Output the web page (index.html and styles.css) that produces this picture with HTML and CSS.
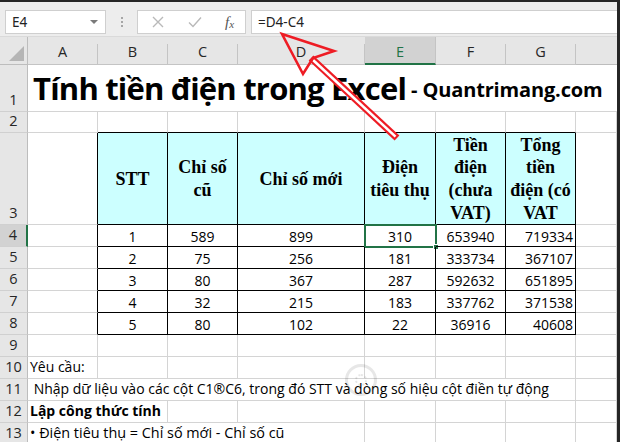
FILE: index.html
```html
<!DOCTYPE html>
<html lang="vi">
<head>
<meta charset="utf-8">
<link rel="stylesheet" href="styles.css">
</head>
<body>
<div class="app">
  <div class="toolbar">
    <div class="namebox"><span>E4</span><span class="dd"></span></div>
    <div class="dots"><i></i><i></i><i></i></div>
    <div class="fxgroup">
      <svg class="ic" width="12" height="12" viewBox="0 0 12 12"><path d="M1 1L11 11M11 1L1 11" stroke="#b9b9b9" stroke-width="1.4" fill="none"/></svg>
      <svg class="ic" width="14" height="12" viewBox="0 0 14 12"><path d="M1 6.5L5 10.5L13 1.5" stroke="#b9b9b9" stroke-width="1.4" fill="none"/></svg>
      <span class="fx">f<sub>x</sub></span>
    </div>
    <div class="formula">=D4-C4</div>
  </div>
  <div class="sheet">
    <!-- header row -->
    <div class="corner"><span class="tri"></span></div>
    <div class="h">A</div><div class="h">B</div><div class="h">C</div><div class="h">D</div><div class="h sel">E</div><div class="h">F</div><div class="h">G</div><div class="h last"></div>
    <!-- row 1 -->
    <div class="r">1</div>
    <div class="c title span8"><b class="big">Tính tiền điện trong Excel</b><b class="small"> - Quantrimang.com</b></div>
    <!-- row 2 -->
    <div class="r">2</div>
    <div class="c"></div><div class="c tt"></div><div class="c tt"></div><div class="c tt"></div><div class="c tt"></div><div class="c tt"></div><div class="c tt"></div><div class="c"></div>
    <!-- row 3 -->
    <div class="r">3</div>
    <div class="c tl"></div>
    <div class="th">STT</div>
    <div class="th">Chỉ số<br>cũ</div>
    <div class="th">Chỉ số mới</div>
    <div class="th">Điện<br>tiêu thụ</div>
    <div class="th">Tiền<br>điện<br>(chưa<br>VAT)</div>
    <div class="th">Tổng<br>tiền<br>điện (có<br>VAT</div>
    <div class="c"></div>
    <!-- row 4 -->
    <div class="r sel">4</div>
    <div class="c tl"></div><div class="td">1</div><div class="td">589</div><div class="td">899</div><div class="td active">310<span class="handle"></span></div><div class="td">653940</div><div class="td rt">719334</div><div class="c"></div>
    <!-- row 5 -->
    <div class="r">5</div>
    <div class="c tl"></div><div class="td">2</div><div class="td">75</div><div class="td">256</div><div class="td">181</div><div class="td">333734</div><div class="td rt">367107</div><div class="c"></div>
    <!-- row 6 -->
    <div class="r">6</div>
    <div class="c tl"></div><div class="td">3</div><div class="td">80</div><div class="td">367</div><div class="td">287</div><div class="td">592632</div><div class="td rt">651895</div><div class="c"></div>
    <!-- row 7 -->
    <div class="r">7</div>
    <div class="c tl"></div><div class="td">4</div><div class="td">32</div><div class="td">215</div><div class="td">183</div><div class="td">337762</div><div class="td rt">371538</div><div class="c"></div>
    <!-- row 8 -->
    <div class="r">8</div>
    <div class="c tl"></div><div class="td">5</div><div class="td">80</div><div class="td">102</div><div class="td">22</div><div class="td">36916</div><div class="td rt">40608</div><div class="c"></div>
    <!-- row 9 -->
    <div class="r">9</div>
    <div class="c"></div><div class="c"></div><div class="c"></div><div class="c"></div><div class="c"></div><div class="c"></div><div class="c"></div><div class="c"></div>
    <!-- row 10 -->
    <div class="r">10</div>
    <div class="c txt">Yêu cầu:</div><div class="c"></div><div class="c"></div><div class="c"></div><div class="c"></div><div class="c"></div><div class="c"></div><div class="c"></div>
    <!-- row 11 -->
    <div class="r">11</div>
    <div class="c txt span7">&nbsp;Nhập dữ liệu vào các cột C1®C6, trong đó STT và dòng số hiệu cột điền tự động</div><div class="c"></div>
    <!-- row 12 -->
    <div class="r">12</div>
    <div class="c txt span2"><b>Lập công thức tính</b></div><div class="c"></div><div class="c"></div><div class="c"></div><div class="c"></div><div class="c"></div><div class="c"></div>
    <!-- row 13 -->
    <div class="r">13</div>
    <div class="c txt span4">• Điện tiêu thụ = Chỉ số mới - Chỉ số cũ</div><div class="c"></div><div class="c"></div><div class="c"></div><div class="c"></div>
  </div>
  <div class="watermark"><span class="wm-logo"><span class="wm-sun"></span></span></div>
  <svg class="arrow" width="620" height="442" viewBox="0 0 620 442">
    <line x1="311" y1="58" x2="397" y2="138" stroke="#ee1c24" stroke-width="7" stroke-linecap="butt"/>
    <line x1="313" y1="60" x2="395.5" y2="136.6" stroke="#ffffff" stroke-width="2.6"/>
    <polygon points="282,34 334,51 313,58 303,74" fill="none" stroke="#ee1c24" stroke-width="2.6" stroke-linejoin="miter"/>
  </svg>
</div>
</body>
</html>
```
FILE: styles.css
```css
* { box-sizing: border-box; }
html, body { margin: 0; padding: 0; background: #fff; }
body { width: 620px; height: 442px; overflow: hidden; }

.app {
  position: relative;
  width: 620px;
  height: 442px;
  overflow: hidden;
  border-top: 2px solid #262626;
  border-right: 3px solid #262626;
  background: #fff;
}

/* toolbar */
.toolbar {
  height: 35px;
  background: #ededed;
  display: flex;
  align-items: flex-start;
  padding-top: 8px;
  padding-left: 5px;
  border-bottom: 1px solid #dadada;
  font-family: "Noto Sans", "Open Sans", sans-serif;
  font-size: 13.5px;
  color: #222;
}
.namebox {
  width: 101px;
  height: 24px;
  background: #fff;
  border: 1px solid #cfcfcf;
  display: flex;
  align-items: center;
  justify-content: space-between;
  padding: 0 6px 0 6px;
}
.dd {
  width: 0; height: 0;
  border-left: 4px solid transparent;
  border-right: 4px solid transparent;
  border-top: 4px solid #7a7a7a;
  margin-right: 1px;
}
.dots {
  width: 31px;
  height: 24px;
  display: flex;
  flex-direction: column;
  align-items: center;
  justify-content: center;
  gap: 2px;
}
.dots i { display: block; width: 2px; height: 2px; background: #a6a6a6; }
.fxgroup {
  width: 109px;
  height: 24px;
  background: #fff;
  border: 1px solid #cfcfcf;
  display: flex;
  align-items: center;
  padding-left: 14px;
  gap: 24px;
}
.fx {
  font-family: "Liberation Serif", serif;
  font-style: italic;
  font-size: 15px;
  color: #555;
  margin-left: -1px;
}
.fx sub { font-size: 11px; vertical-align: -1px; }
.formula {
  flex: 1;
  height: 24px;
  margin-left: 5px;
  background: #fff;
  border: 1px solid #cfcfcf;
  border-right: none;
  padding-left: 6px;
  display: flex;
  align-items: center;
}

/* sheet grid */
.sheet {
  display: grid;
  grid-template-columns: 28px 70px 70px 70px 127px 71px 70px 70px 1fr;
  grid-template-rows: 28px 47px 21px 92px repeat(10, 22px);
  font-family: "Open Sans", sans-serif;
  font-size: 14px;
  color: #000;
}
.corner {
  background: #e6e6e6;
  border-right: 1px solid #bdbdbd;
  border-bottom: 1px solid #bdbdbd;
  position: relative;
}
.tri {
  position: absolute;
  right: 3px;
  bottom: 3px;
  width: 0; height: 0;
  border-left: 15px solid transparent;
  border-bottom: 15px solid #b5b5b5;
}
.h {
  background: #e6e6e6;
  border-bottom: 1px solid #bdbdbd;
  border-right: 1px solid;
  border-image: linear-gradient(to bottom, transparent 8px, #c4c4c4 8px) 1;
  border-top: 0; border-left: 0;
  display: flex;
  align-items: center;
  justify-content: center;
  padding-top: 2px;
  font-family: "Open Sans", sans-serif;
  font-size: 14.5px;
  color: #262626;
}
.h.sel {
  background: #d2d2d2;
  color: #217346;
  border-image: none;
  border-right: 1px solid #c4c4c4;
  border-bottom: 2px solid #217346;
}
.h.last { border-image: none; border-right: 0; }
.r {
  background: #e6e6e6;
  border-right: 1px solid #bdbdbd;
  border-bottom: 1px solid #d0d0d0;
  display: flex;
  align-items: flex-end;
  justify-content: center;
  font-size: 14.5px;
  color: #262626;
  padding-bottom: 1px;
  line-height: 20px;
}
.r.sel {
  background: #d2d2d2;
  border-right: 2px solid #217346;
}
.c {
  border-right: 1px solid #d4d4d4;
  border-bottom: 1px solid #d4d4d4;
  white-space: nowrap;
}
.c.tt { border-bottom-color: #000; }
.c.tl { border-right-color: #000; }
.span8 { grid-column: span 8; border-right: 0; }
.span7 { grid-column: span 7; }
.span4 { grid-column: span 4; }
.span2 { grid-column: span 2; }
.title {
  display: flex;
  align-items: flex-end;
  padding-left: 5px;
  padding-bottom: 3px;
}
.title .big {
  font-family: "Open Sans", sans-serif;
  font-size: 31px;
  line-height: 40px;
  letter-spacing: -0.8px;
  color: #000;
}
.title .small {
  font-family: "Open Sans", sans-serif;
  font-size: 20px;
  line-height: 34px;
  white-space: pre;
  margin-left: 0;
  letter-spacing: -0.15px;
  margin-bottom: 1px;
}
.txt {
  display: flex;
  align-items: flex-end;
  padding-left: 2px;
  padding-bottom: 1px;
  font-size: 14px;
  line-height: 20px;
}
.span4.txt { font-size: 14.4px; }
.th {
  background: #ccffff;
  border-right: 1px solid #000;
  border-bottom: 1px solid #000;
  display: flex;
  align-items: center;
  justify-content: center;
  text-align: center;
  font-family: "Liberation Serif", serif;
  font-weight: bold;
  font-size: 18px;
  line-height: 22.7px;
  padding-top: 1px;
}
.td {
  border-right: 1px solid #000;
  border-bottom: 1px solid #000;
  display: flex;
  align-items: center;
  justify-content: center;
  font-size: 14px;
  position: relative;
  padding-top: 1px;
}
.td.rt { justify-content: flex-end; padding-right: 2px; }
.td.active { outline: 2px solid #217346; outline-offset: -1px; }
.handle {
  position: absolute;
  right: -4px;
  bottom: -4px;
  width: 6px;
  height: 6px;
  background: #217346;
  border: 1px solid #fff;
}

/* watermark */
.watermark {
  position: absolute;
  left: 345px;
  top: 362px;
  pointer-events: none;
  opacity: 0.09;
}
.wm-logo {
  display: flex;
  align-items: center;
  justify-content: center;
  width: 32px; height: 32px;
  border: 3px solid #000;
  border-radius: 50%;
}
.wm-sun {
  width: 12px; height: 12px;
  border: 2px dotted #000;
  border-radius: 50%;
}

.arrow {
  position: absolute;
  left: 0;
  top: -2px;
  pointer-events: none;
}
```
